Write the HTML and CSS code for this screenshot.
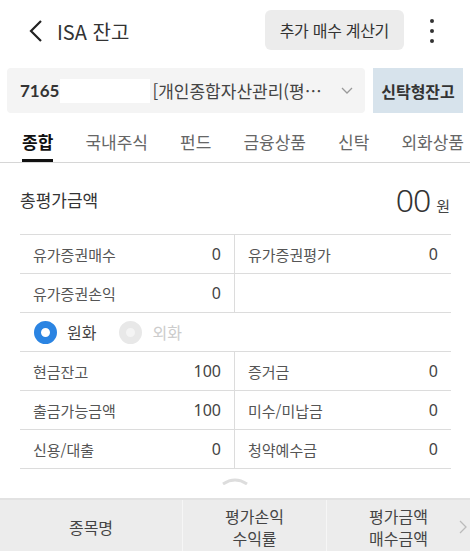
FILE: index.html
```html
<!DOCTYPE html>
<html lang="ko">
<head>
  <meta charset="UTF-8">
  <meta name="viewport" content="width=device-width, initial-scale=1.0">
  <title>ISA 잔고</title>
  <link rel="stylesheet" href="styles.css">
</head>
<body>
  <div class="header">
    <a class="back" href="#">
      <svg width="16" height="24" viewBox="0 0 16 24"><path d="M13 2 L3 12 L13 22" fill="none" stroke="#222" stroke-width="2.2"/></svg>
    </a>
    <div class="title">ISA 잔고</div>
    <button class="calc">추가 매수 계산기</button>
    <div class="more"><span></span><span></span><span></span></div>
  </div>

  <div class="account">
    <div class="select">
      <b class="acc-no">7165</b>
      <span class="mask"></span>
      <span class="acc-name">[개인종합자산관리(평…</span>
      <svg class="down" width="12" height="8" viewBox="0 0 12 8"><path d="M1 1 L6 6 L11 1" fill="none" stroke="#999" stroke-width="1.3"/></svg>
    </div>
    <button class="trust">신탁형잔고</button>
  </div>

  <div class="tabs">
    <div class="tab on">종합</div>
    <div class="tab">국내주식</div>
    <div class="tab">펀드</div>
    <div class="tab">금융상품</div>
    <div class="tab">신탁</div>
    <div class="tab">외화상품</div>
  </div>

  <div class="total">
    <div class="total-label">총평가금액</div>
    <div class="total-value"><span class="num">00</span><span class="won">원</span></div>
  </div>

  <div class="grid">
    <div class="row">
      <div class="cell"><span>유가증권매수</span><span>0</span></div>
      <div class="cell"><span>유가증권평가</span><span>0</span></div>
    </div>
    <div class="row">
      <div class="cell"><span>유가증권손익</span><span>0</span></div>
      <div class="cell"></div>
    </div>
    <div class="row radios">
      <label class="radio on"><i></i>원화</label>
      <label class="radio off"><i></i>외화</label>
    </div>
    <div class="row">
      <div class="cell"><span>현금잔고</span><span>100</span></div>
      <div class="cell"><span>증거금</span><span>0</span></div>
    </div>
    <div class="row">
      <div class="cell"><span>출금가능금액</span><span>100</span></div>
      <div class="cell"><span>미수/미납금</span><span>0</span></div>
    </div>
    <div class="row">
      <div class="cell"><span>신용/대출</span><span>0</span></div>
      <div class="cell"><span>청약예수금</span><span>0</span></div>
    </div>
  </div>

  <div class="fold">
    <svg width="26" height="8" viewBox="0 0 26 8"><path d="M1 7 Q13 -1 25 7" fill="none" stroke="#ddd" stroke-width="3"/></svg>
  </div>

  <div class="list-head">
    <div class="col c1">종목명</div>
    <div class="col c2">평가손익<br>수익률</div>
    <div class="col c3">평가금액<br>매수금액</div>
    <svg class="next" width="8" height="14" viewBox="0 0 8 14"><path d="M1 1 L7 7 L1 13" fill="none" stroke="#bbb" stroke-width="1.3"/></svg>
  </div>
</body>
</html>
```

FILE: styles.css
```css
body {
  margin: 0;
  padding: 0;
  width: 470px;
  height: 551px;
  overflow: hidden;
  background: #fff;
  font-family: 'Noto Sans CJK KR', 'Noto Sans', sans-serif;
  color: #333;
}

.header {
  display: flex;
  align-items: center;
  height: 62px;
  padding: 0 10px 0 28px;
}

.back {
  display: flex;
  width: 16px;
  height: 24px;
}

.title {
  margin-left: 13px;
  font-size: 20px;
  color: #333;
  flex: 1;
}

.calc {
  height: 40px;
  padding: 0 15px;
  background-color: #ececec;
  border: none;
  border-radius: 6px;
  font-family: inherit;
  font-size: 16px;
  letter-spacing: -0.3px;
  color: #333;
  margin-top: -2px;
}

.more {
  width: 56px;
  display: flex;
  flex-direction: column;
  align-items: center;
  gap: 6px;
}

.more span {
  width: 4px;
  height: 4px;
  border-radius: 50%;
  background: #333;
}

.account {
  display: flex;
  gap: 8px;
  padding: 6px 7px 0 7px;
  height: 45px;
}

.select {
  flex: 1;
  display: flex;
  align-items: center;
  background: #f4f4f4;
  border-radius: 4px;
  padding: 0 12px 0 13px;
}

.acc-no {
  font-family: 'Lato', sans-serif;
  font-weight: bold;
  font-size: 17px;
  color: #333;
}

.mask {
  width: 90px;
  height: 24px;
  background: #fff;
  margin-left: 1px;
}

.acc-name {
  margin-left: 2px;
  font-size: 17px;
  color: #444;
  flex: 1;
  white-space: nowrap;
}

.trust {
  width: 90px;
  border: none;
  background: #d7e3ec;
  font-family: inherit;
  font-weight: bold;
  font-size: 16px;
  color: #333;
  padding: 0;
}

.tabs {
  display: flex;
  justify-content: space-between;
  padding: 0 6px 0 22px;
  margin-top: 12px;
  border-bottom: 1px solid #d6d6d6;
}

.tab {
  font-size: 17px;
  color: #666;
  height: 37px;
  line-height: 34px;
  box-sizing: border-box;
}

.tab.on {
  color: #111;
  font-weight: bold;
  border-bottom: 3px solid #111;
  margin-bottom: -1px;
}

.total {
  display: flex;
  justify-content: space-between;
  align-items: center;
  padding: 2px 20px 0 20px;
  height: 69px;
}

.total-label {
  font-size: 17px;
  color: #333;
}

.total-value {
  display: flex;
  align-items: baseline;
}

.num {
  font-family: 'Noto Sans', sans-serif;
  font-weight: 300;
  font-size: 32px;
  letter-spacing: -1px;
  color: #333;
}

.won {
  font-size: 15px;
  margin-left: 6px;
  color: #444;
}

.grid {
  margin: 0 19px 0 20px;
  border-top: 1px solid #dcdcdc;
}

.row {
  display: flex;
  height: 38px;
  border-bottom: 1px solid #dcdcdc;
}

.cell {
  flex: 0 0 214px;
  display: flex;
  justify-content: space-between;
  align-items: center;
  padding: 0 13px 0 13px;
  box-sizing: border-box;
  font-size: 15px;
  color: #555;
}

.cell + .cell {
  flex: 1;
  border-left: 1px solid #dcdcdc;
}

.cell span:last-child {
  font-family: 'Noto Sans', sans-serif;
  font-size: 16px;
  color: #444;
}

.radios {
  align-items: center;
  padding-left: 14px;
  gap: 23px;
}

.radio {
  display: flex;
  align-items: center;
  font-size: 16px;
  color: #444;
}

.radio i {
  width: 23px;
  height: 23px;
  border-radius: 50%;
  box-sizing: border-box;
  border: 7px solid #2b84e2;
  background: #fff;
  margin-right: 10px;
}

.radio.off {
  color: #ccc;
}

.radio.off i {
  border-color: #e8e8e8;
  background: #f4f4f4;
}

.fold {
  display: flex;
  justify-content: center;
  padding-top: 8px;
  height: 21px;
}

.list-head {
  display: flex;
  align-items: stretch;
  height: 54px;
  background: #ececec;
  border-top: 2px solid #e2e2e2;
  position: relative;
}

.col {
  display: flex;
  align-items: center;
  justify-content: center;
  text-align: center;
  font-size: 16px;
  line-height: 22px;
  color: #444;
}

.c1 {
  width: 182px;
}

.c2 {
  width: 143px;
  border-left: 1px solid #f6f6f6;
}

.c3 {
  width: 143px;
  border-left: 1px solid #f6f6f6;
}

.next {
  position: absolute;
  right: 3px;
  top: 20px;
}
```
